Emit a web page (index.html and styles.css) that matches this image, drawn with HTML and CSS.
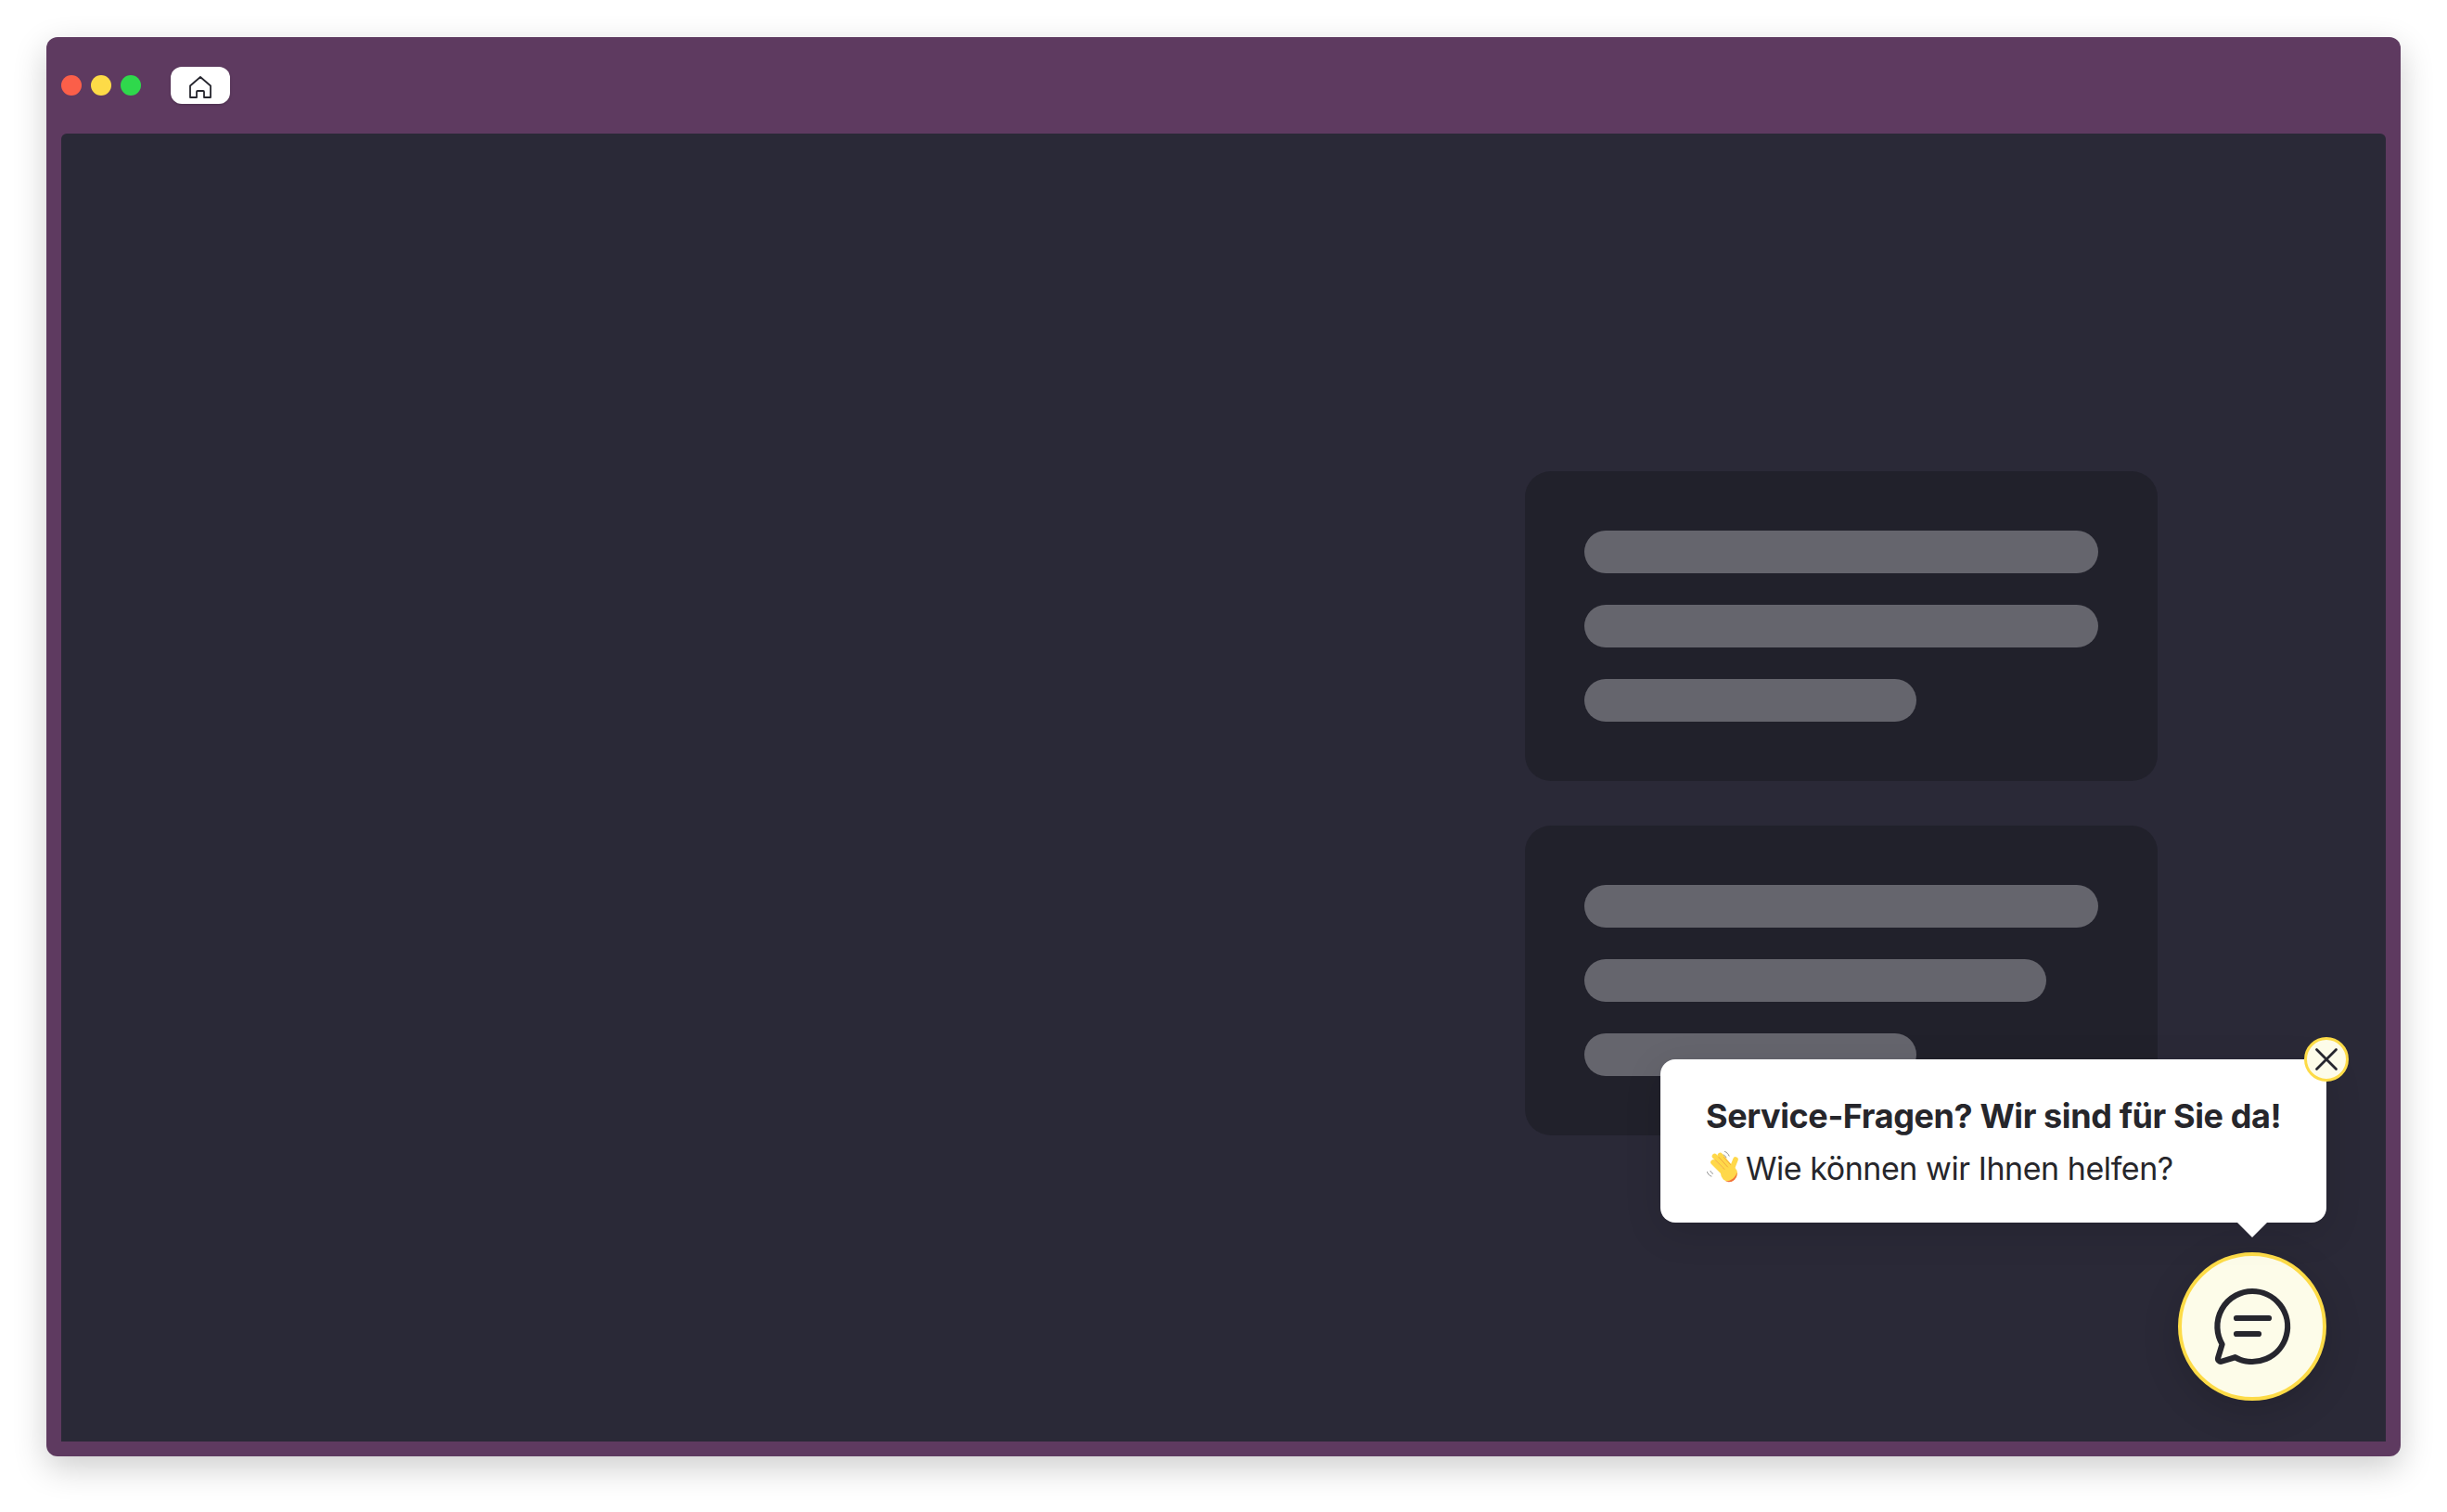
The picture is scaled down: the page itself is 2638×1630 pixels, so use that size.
FILE: index.html
```html
<!DOCTYPE html>
<html lang="de">
<head>
    <meta charset="UTF-8">
    <meta name="viewport" content="width=device-width, initial-scale=1.0">
    <title>Service-Fragen</title>
    <link rel="stylesheet" href="styles.css">
</head>
<body>
    <div class="window">
        <div class="titlebar">
            <div class="dots">
                <span class="dot dot-red"></span>
                <span class="dot dot-yellow"></span>
                <span class="dot dot-green"></span>
            </div>
            <div class="tab">
                <svg class="home-icon" viewBox="0 0 24 24" fill="none" stroke="#26262e" stroke-width="1.800" stroke-linejoin="round">
                    <path d="M1 23V10.500L12 1l11 9.500V23h-7v-6a1 1 0 0 0-1-1H9a1 1 0 0 0-1 1v6z"/>
                </svg>
            </div>
        </div>
        <div class="content">
            <div class="card">
                <div class="bar"></div>
                <div class="bar"></div>
                <div class="bar bar-short"></div>
            </div>
            <div class="card">
                <div class="bar"></div>
                <div class="bar bar-mid"></div>
                <div class="bar bar-short"></div>
            </div>

            <div class="widget">
                <div class="bubble">
                    <button class="close">
                        <svg viewBox="0 0 24 24" fill="none" stroke="#26262e" stroke-width="2.400" stroke-linecap="round">
                            <path d="M3 3l18 18M21 3L3 21"/>
                        </svg>
                    </button>
                    <p class="bubble-title">Service-Fragen? Wir sind für Sie da!</p>
                    <p class="bubble-text">
                        <svg class="wave" viewBox="16 18 38 38" fill="none" stroke-linecap="round">
                            <path d="M38.500 20.500c2.200.8 3.800 2.400 4.600 4.600M37 24c1.400.5 2.400 1.500 2.900 2.900" stroke="#8f8f8f" stroke-width="1"/>
                            <path d="M19.500 42.500c.6 2.200 2.200 3.800 4.400 4.600M23 41.500c.4 1.300 1.300 2.200 2.600 2.700" stroke="#8f8f8f" stroke-width="1"/>
                            <g stroke="#ffd84a" stroke-width="5.600">
                                <path d="M26 32l14 14"/>
                                <path d="M27.500 25.500l15 15"/>
                                <path d="M33.500 24.500l12 14"/>
                                <path d="M50 29l-3.500 9"/>
                            </g>
                            <circle cx="43" cy="44" r="9" fill="#ffd84a"/>
                            <path d="M51.500 43a9 9 0 0 1-12.500 9.500c4 .2 10.500-2.500 12.500-9.500z" fill="#f2703a"/>
                            <path d="M28 29.500l10 10M32 26.500l9.500 10.500M37.500 26.500l7 8" stroke="#ee9a3a" stroke-width=".8"/>
                        </svg>
                        Wie können wir Ihnen helfen?
                    </p>
                </div>
                <button class="launcher">
                    <svg viewBox="0 0 24 24" fill="none" stroke="#26262e" stroke-width="1.550" stroke-linecap="round" stroke-linejoin="round">
                        <path d="M12 2.500a9.500 9.500 0 1 1-4.600 17.800l-3.600 1.100a.8.8 0 0 1-1-1l1.100-3.600A9.500 9.500 0 0 1 12 2.500z"/>
                        <path d="M7.750 9.750h8.750M7.750 14h6"/>
                    </svg>
                </button>
            </div>
        </div>
    </div>
</body>
</html>
```

FILE: styles.css
```css
* { box-sizing: border-box; }
html, body { margin: 0; background: #fff; }
body { padding: 40px 50px 60px; height: 1630px; overflow: hidden; font-family: Inter, "Noto Sans", sans-serif; color: #26262b; }

.window { height: 1530px; background: #5e3a60; border-radius: 12px; padding: 0 16px 16px; display: flex; flex-direction: column; box-shadow: 0 12px 36px rgba(0,0,0,0.2); }

.titlebar { height: 104px; flex: none; display: flex; align-items: center; }
.dots { display: flex; gap: 10px; }
.dot { width: 22px; height: 22px; border-radius: 50%; }
.dot-red { background: #fb5f49; }
.dot-yellow { background: #fddb47; }
.dot-green { background: #2fd84c; }
.tab { width: 64px; height: 40px; margin-left: 32px; background: #fff; border-radius: 12px; display: flex; align-items: center; justify-content: center; box-shadow: 0 1px 3px rgba(0,0,0,0.2); }
.home-icon { width: 24px; height: 24px; margin-top: 4px; display: block; }

.content { position: relative; flex: 1; background: #2a2937; border-radius: 6px 6px 0 0; padding: 364px 246px 0 0; display: flex; flex-direction: column; align-items: flex-end; gap: 48px; }
.card { width: 682px; height: 334px; background: #21212b; border-radius: 28px; padding: 64px; display: flex; flex-direction: column; gap: 34px; }
.bar { width: 554px; height: 46px; background: #65656d; border-radius: 23px; }
.bar-mid { width: 498px; }
.bar-short { width: 358px; }

.widget { position: absolute; right: 64px; bottom: 44px; display: flex; flex-direction: column; align-items: flex-end; gap: 32px; }
.bubble { position: relative; width: 718px; height: 176px; background: #fff; border-radius: 16px; padding: 33px 48px 0 49px; box-shadow: 0 10px 40px rgba(0,0,0,0.12); }
.bubble::after { content: ""; position: absolute; right: 64px; bottom: -16px; width: 32px; height: 16px; background: #fff; clip-path: polygon(0 0, 100% 0, 50% 100%); }
.bubble-title { margin: 0; font-size: 36px; line-height: 56px; font-weight: 700; letter-spacing: -0.4px; white-space: nowrap; }
.bubble-text { margin: 0; font-size: 34px; line-height: 57px; font-weight: 400; letter-spacing: -0.45px; white-space: nowrap; display: flex; align-items: center; gap: 7px; }
.wave { width: 38px; height: 38px; flex: none; margin-left: -2px; margin-top: -4px; }

.close { position: absolute; top: -24px; right: -24px; width: 48px; height: 48px; padding: 0; background: #fdfce9; border: 3px solid #fddb47; border-radius: 50%; display: flex; align-items: center; justify-content: center; }
.close svg { width: 28px; height: 28px; display: block; }

.launcher { width: 160px; height: 160px; padding: 0; background: #fdfce9; border: 4px solid #fddb47; border-radius: 50%; display: flex; align-items: center; justify-content: center; box-shadow: 0 10px 40px rgba(0,0,0,0.15); }
.launcher svg { width: 96px; height: 96px; display: block; }
```
